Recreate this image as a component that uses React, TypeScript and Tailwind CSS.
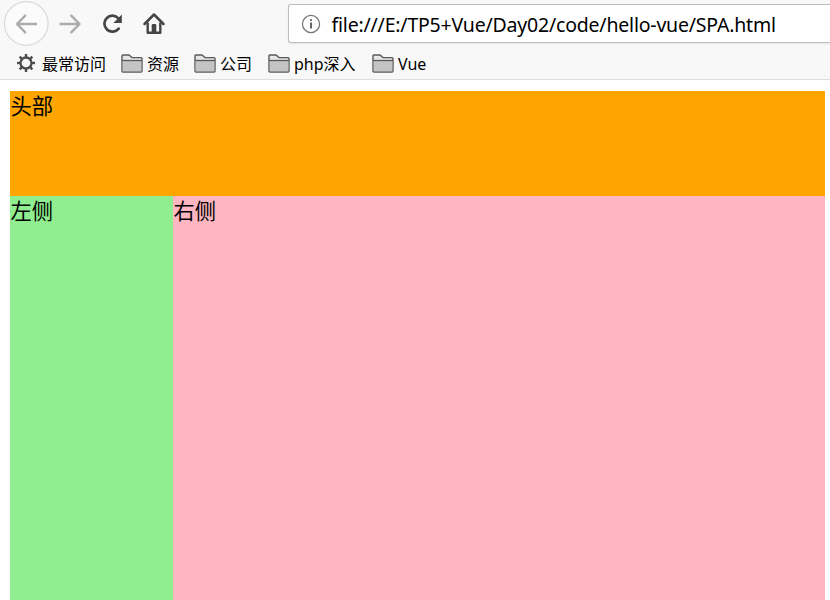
import React from 'react';

function Folder() {
  return (
    <svg className="h-[19px] w-[22px] shrink-0" viewBox="0 0 22 19" fill="none">
      <path d="M1 17V2Q1 1 2 1H8L11 3.6H20Q21 3.6 21 4.6V17Q21 18 20 18H2Q1 18 1 17Z" fill="#e6e6e6" stroke="#595959" strokeWidth="1.4" />
      <path d="M1.7 6.7H20.3V17.3H1.7Z" fill="#c4c4c4" />
      <path d="M1 6.5H21" stroke="#595959" strokeWidth="1.3" />
    </svg>
  );
}

function Bookmark({ label, width }: { label: string; width: string }) {
  return (
    <div className={`flex shrink-0 items-center gap-[4px] ${width}`}>
      <Folder />
      <span className="mt-[1px] whitespace-nowrap">{label}</span>
    </div>
  );
}

function Gear() {
  return (
    <svg className="h-[20px] w-[20px] shrink-0" viewBox="-10 -10 20 20" fill="none" stroke="#4d4d4d">
      <circle r="5.5" strokeWidth="2.3" />
      {[0, 45, 90, 135, 180, 225, 270, 315].map((a) => (
        <path key={a} d="M0 -5.8V-9" strokeWidth="2.4" transform={`rotate(${a})`} />
      ))}
    </svg>
  );
}

export default function App() {
  return (
    <div className="flex h-[600px] w-[830px] flex-col overflow-hidden bg-white font-['Noto_Sans','Noto_Sans_CJK_SC',sans-serif] text-black">
      <header className="flex h-[80px] shrink-0 flex-col border-b border-[#dcdcdc] bg-[#f8f8f8]">
        <div className="flex h-[47px] shrink-0">
          <svg className="h-[47px] w-[288px] shrink-0" viewBox="0 0 288 47" fill="none">
            <circle cx="26.3" cy="23.5" r="21.8" fill="#fbfbfb" stroke="#d9d9d9" strokeWidth="1.2" />
            <path d="M36 24H17.5M25.2 15.7L17 24L25.2 32.3" stroke="#ababab" strokeWidth="2.4" strokeLinecap="round" strokeLinejoin="round" />
            <path d="M60.5 24H79M71.3 15.7L79.5 24L71.3 32.3" stroke="#ababab" strokeWidth="2.4" strokeLinecap="round" strokeLinejoin="round" />
            <path d="M118.5 18.5A8 8 0 1 0 118.7 28.6" stroke="#454545" strokeWidth="2.7" strokeLinecap="round" />
            <path d="M121.8 14.6V23H113.4Z" fill="#454545" />
            <path d="M144.5 24L154 14.5L163.5 24" stroke="#454545" strokeWidth="2.5" strokeLinecap="round" strokeLinejoin="round" />
            <path d="M147.7 22.5V32.8H160.3V22.5" stroke="#454545" strokeWidth="2.4" strokeLinejoin="round" />
            <path d="M151.7 33V25.3Q151.7 24 153 24H155Q156.3 24 156.3 25.3V33Z" fill="#454545" />
          </svg>
          <div className="mt-[4px] flex h-[39px] flex-1 items-center rounded-l-[3px] border border-r-0 border-[#bdbdbd] bg-white pl-[12px] shadow-[0_1px_2px_rgba(0,0,0,0.08)]">
            <svg className="-ml-[0.5px] h-[20px] w-[20px] shrink-0" viewBox="0 0 20 20" fill="none">
              <circle cx="10" cy="10" r="8.6" stroke="#777" strokeWidth="1.3" />
              <path d="M10 8.5V14.5M10 5.2V7" stroke="#666" strokeWidth="2" />
            </svg>
            <span className="mt-[3px] ml-[11px] whitespace-nowrap text-[19.5px] leading-none tracking-[-0.2px]">file:///E:/TP5+Vue/Day02/code/hello-vue/SPA.html</span>
          </div>
        </div>
        <nav className="flex h-[32px] items-center pl-[16px] text-[16px] leading-none">
          <div className="flex w-[105px] shrink-0 items-center gap-[6px]">
            <Gear />
            <span className="mt-[1px] whitespace-nowrap">最常访问</span>
          </div>
          <Bookmark label="资源" width="w-[73px]" />
          <Bookmark label="公司" width="w-[74px]" />
          <Bookmark label="php深入" width="w-[104px]" />
          <Bookmark label="Vue" width="w-[70px]" />
        </nav>
      </header>
      <main className="mt-[11px] mr-[5px] ml-[10.4px] flex flex-1 flex-col text-[21.3px] leading-[29px]">
        <section className="h-[105px] shrink-0 bg-[#ffa500]">头部</section>
        <div className="flex flex-1">
          <aside className="w-[163px] shrink-0 bg-[#90ee90]">左侧</aside>
          <section className="flex-1 bg-[#ffb6c1]">右侧</section>
        </div>
      </main>
    </div>
  );
}
